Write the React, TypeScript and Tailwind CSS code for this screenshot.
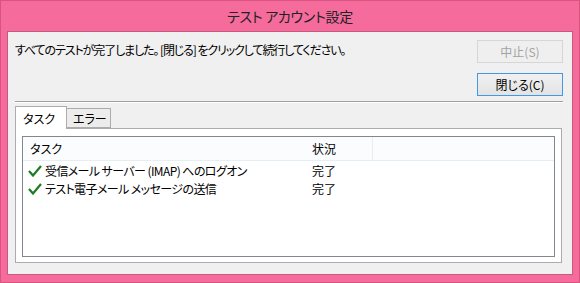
const font = "font-['Meiryo_UI','Noto_Sans_CJK_JP',sans-serif] [font-feature-settings:'palt']";

function Check() {
  return (
    <svg width="14" height="12" viewBox="0 0 14 12" className="shrink-0">
      <path d="M1 6 L5 10.5 L13 1" fill="none" stroke="#1c7d24" strokeWidth="2.2" />
    </svg>
  );
}

const rows = [
  { task: "受信メール サーバー (IMAP) へのログオン", status: "完了" },
  { task: "テスト電子メール メッセージの送信", status: "完了" },
];

export default function App() {
  return (
    <div className={`w-[580px] h-[283px] bg-[#f46b9c] border border-[#d9557f] flex flex-col text-[12px] text-black ${font}`}>
      <div className="h-[30px] flex items-center justify-center text-[14px] tracking-[-0.3px] text-[#222]">
        テスト アカウント設定
      </div>
      <div className="mx-[6px] flex-1 mb-[7px] bg-[#f0f0f0] border border-[#c85a80] flex flex-col px-[7px]">
        <div className="flex justify-between pt-[8px]">
          <p className="pt-[2px] leading-[16px] tracking-[-1.1px]">すべてのテストが完了しました。 [閉じる] をクリックして続行してください。</p>
          <div className="flex flex-col gap-[10px] mr-[2px]">
            <button className="w-[86px] h-[23px] border border-[#d6d6d6] bg-[#efefef] text-[#a3a3a3]">中止(S)</button>
            <button className="w-[86px] h-[23px] border border-[#3d9be9] bg-gradient-to-b from-[#f1f1f1] to-[#e3e3e3]">閉じる(C)</button>
          </div>
        </div>
        <div className="mt-[5px] mr-[2px] border-t border-[#a0a0a0] border-b border-b-white" />
        <div className="mt-[3px] mr-[3px] flex flex-col flex-1 mb-[11px]">
          <div className="flex items-end h-[22px]">
            <div className="w-[52px] h-[23px] -mb-px bg-white border border-[#acacac] border-b-0 relative z-10 pl-[7px] pt-[3px]">タスク</div>
            <div className="w-[44px] h-[20px] bg-[#ececec] border border-[#acacac] border-l-0 pl-[6px] pt-[1px]">エラー</div>
          </div>
          <div className="flex-1 bg-white border border-[#acacac] px-[6px] pt-[7px] pb-[5px] flex flex-col">
            <div className="flex-1 border border-[#828790] flex flex-col">
              <div className="flex h-[24px] border-b border-[#e5edf5] bg-[#fbfcfd]">
                <div className="w-[282px] pl-[7px] flex items-center">タスク</div>
                <div className="w-[68px] pl-[7px] flex items-center border-r border-[#e5edf5]">状況</div>
              </div>
              <div className="pt-[1px]">
                {rows.map((r) => (
                  <div key={r.task} className="flex h-[18px] items-center">
                    <div className="w-[282px] pl-[5px] flex items-center gap-[3px]">
                      <Check />
                      <span className="tracking-[-0.6px]">{r.task}</span>
                    </div>
                    <div className="pl-[7px]">{r.status}</div>
                  </div>
                ))}
              </div>
            </div>
          </div>
        </div>
      </div>
    </div>
  );
}
